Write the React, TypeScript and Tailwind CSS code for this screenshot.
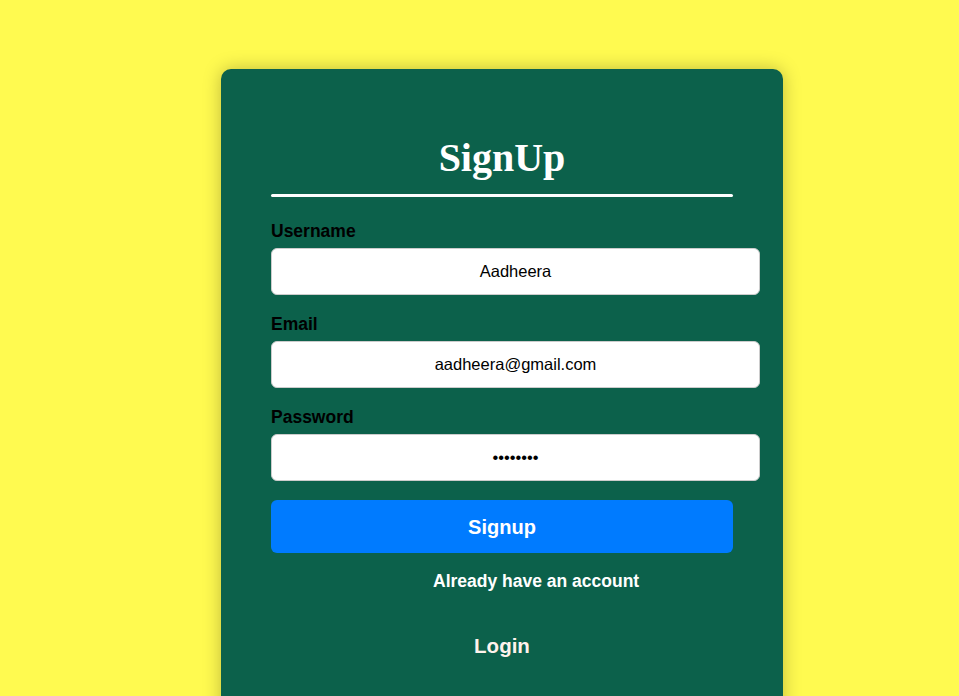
export default function App() {
  return (
    <div className="min-h-screen bg-[#FFFA50] overflow-hidden pl-[221px] pt-[69px] font-['Liberation_Sans',Arial,sans-serif]">
      <div className="w-[562px] h-[700px] bg-[#0C614B] rounded-[10px] shadow-[0_0_18px_rgba(0,0,0,0.25)] pt-[66px] px-[50px]">
        {/* Title */}
        <h1 className="text-center text-white font-bold text-[40px] leading-[46px] font-['Liberation_Serif','Times_New_Roman',serif] w-[462px]">
          SignUp
        </h1>
        <div className="w-[462px] h-[3px] bg-white rounded-full mt-[13px]" />

        <form className="mt-[24px] flex flex-col">
          <label className="text-black font-bold text-[17.5px] leading-[20px]">Username</label>
          <input
            readOnly
            value="Aadheera"
            className="mt-[7px] w-[489px] h-[47px] bg-white border border-[#cccccc] rounded-[6px] text-center text-black text-[16.5px] outline-none"
          />

          <label className="mt-[19px] text-black font-bold text-[17.5px] leading-[20px]">Email</label>
          <input
            readOnly
            value="aadheera@gmail.com"
            className="mt-[7px] w-[489px] h-[47px] bg-white border border-[#cccccc] rounded-[6px] text-center text-black text-[16.5px] outline-none"
          />

          <label className="mt-[19px] text-black font-bold text-[17.5px] leading-[20px]">Password</label>
          <input
            readOnly
            type="password"
            value="aadheera"
            className="mt-[7px] w-[489px] h-[47px] bg-white border border-[#cccccc] rounded-[6px] text-center text-black text-[16.5px] outline-none"
          />

          <button
            type="button"
            className="mt-[19px] w-[462px] h-[53px] bg-[#007BFF] rounded-[6px] text-white font-bold text-[20px]"
          >
            Signup
          </button>
        </form>

        <p className="mt-[18px] ml-[162px] text-white font-bold text-[17.5px] leading-[20px]">
          Already have an account
        </p>
        <p className="mt-[43px] w-[462px] text-center text-[#FFF3EC] font-bold text-[20.5px] leading-[24px]">
          Login
        </p>
      </div>
    </div>
  );
}
